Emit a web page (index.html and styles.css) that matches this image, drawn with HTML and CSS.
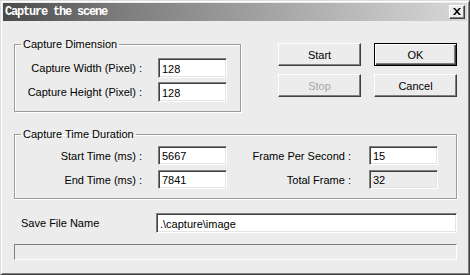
FILE: index.html
```html
<!DOCTYPE html>
<html>
<head>
<meta charset="utf-8">
<link rel="stylesheet" href="styles.css">
</head>
<body>
<div class="window">
  <div class="titlebar">
    <span class="title">Capture the scene</span>
    <span class="close"><svg width="8" height="7" viewBox="0 0 8 7"><path d="M0 0h2l2 2.2L6 0h2L5 3.5 8 7H6L4 4.8 2 7H0l3-3.5z" fill="#000"/></svg></span>
  </div>
  <div class="content">
    <div class="top-row">
      <fieldset class="group group-dim">
        <legend>Capture Dimension</legend>
        <div class="grid grid-2">
          <label class="lbl">Capture Width (Pixel) :</label>
          <input class="field" value="128" readonly>
          <label class="lbl">Capture Height (Pixel) :</label>
          <input class="field" value="128" readonly>
        </div>
      </fieldset>
      <div class="buttons">
        <button class="btn">Start</button>
        <button class="btn default">OK</button>
        <button class="btn disabled">Stop</button>
        <button class="btn">Cancel</button>
      </div>
    </div>
    <fieldset class="group group-time">
      <legend>Capture Time Duration</legend>
      <div class="grid grid-4">
        <label class="lbl">Start Time (ms) :</label>
        <input class="field" value="5667" readonly>
        <label class="lbl lbl-r">Frame Per Second :</label>
        <input class="field" value="15" readonly>
        <label class="lbl">End Time (ms) :</label>
        <input class="field" value="7841" readonly>
        <label class="lbl lbl-r">Total Frame :</label>
        <input class="field field-disabled" value="32" readonly>
      </div>
    </fieldset>
    <div class="save-row">
      <label class="save-lbl">Save File Name</label>
      <input class="field field-wide" value=".\capture\image" readonly>
    </div>
    <div class="progress"></div>
  </div>
</div>
</body>
</html>
```
FILE: styles.css
```css
* { box-sizing: border-box; }
html, body { margin: 0; padding: 0; background: #ececec; }
body { font-family: "Liberation Sans", Arial, sans-serif; font-size: 11px; color: #000; }

.window {
  width: 470px;
  height: 275px;
  background: #ececec;
  border: 1px solid;
  border-color: #dcdcdc #404040 #404040 #dcdcdc;
  box-shadow: inset 1px 1px #fff, inset -1px -1px #808080;
  padding: 2px;
}

.titlebar {
  height: 18px;
  background: linear-gradient(to right, #4a4a4a, #7c7c7c 25%, #d8d8d8);
  display: flex;
  align-items: center;
  justify-content: space-between;
  padding: 0 2px 0 2px;
}
.title {
  font-family: "Liberation Mono", "DejaVu Sans Mono", monospace;
  font-weight: bold;
  font-size: 12px;
  letter-spacing: -1.2px;
  color: #fff;
  line-height: 14px;
}
.close {
  width: 16px;
  height: 14px;
  background: #ececec;
  border: 1px solid;
  border-color: #fff #404040 #404040 #fff;
  box-shadow: inset -1px -1px #808080;
  display: flex;
  align-items: center;
  justify-content: center;
  padding-bottom: 1px;
}

.content {
  padding: 17px 10px 0 11px;
}

.top-row {
  display: flex;
  align-items: flex-start;
}

.group {
  margin: 0;
  min-width: 0;
  border: 1px solid #9c9c9c;
  box-shadow: inset 1px 1px #fff, 1px 1px #fff;
}
.group legend {
  padding: 0 2px;
  margin-left: 6px;
  line-height: 13px;
  font-size: 11px;
}
.group-dim {
  width: 227px;
  padding: 7px 0 9px 0;
}
.group-time {
  width: 443px;
  margin-top: 16px;
  padding: 5px 0 9px 0;
}

.grid {
  display: grid;
  align-items: center;
}
.grid-2 {
  grid-template-columns: 143px 69px;
  row-gap: 4px;
}
.grid-4 {
  grid-template-columns: 143px 69px 142px 69px;
  row-gap: 5px;
}
.lbl {
  text-align: right;
  padding-right: 16px;
  white-space: nowrap;
}
.lbl-r { padding-right: 18px; }

.field {
  display: block;
  width: 69px;
  height: 20px;
  margin: 0;
  padding: 1px 2px 0 3px;
  font-family: "Liberation Sans", Arial, sans-serif;
  font-size: 11px;
  color: #000;
  background: #fff;
  border: 1px solid;
  border-color: #808080 #fff #fff #808080;
  box-shadow: inset 1px 1px #404040, inset -1px -1px #e4e4e4;
  outline: none;
}
.grid-4 .field { height: 19px; }
.field-disabled { background: #ececec; }

.buttons {
  margin-left: 37px;
  margin-top: 5px;
  display: grid;
  grid-template-columns: 83px 83px;
  column-gap: 13px;
  row-gap: 8px;
}
.btn {
  height: 23px;
  margin: 0;
  padding: 0;
  font-family: "Liberation Sans", Arial, sans-serif;
  font-size: 11px;
  color: #000;
  background: #ececec;
  border: 1px solid;
  border-color: #fff #404040 #404040 #fff;
  box-shadow: inset -1px -1px #808080;
}
.btn.default {
  border: 1px solid #000;
  box-shadow: inset 1px 1px #fff, inset -1px -1px #404040, inset -2px -2px #808080;
}
.btn.disabled { color: #a6a6a6; }

.save-row {
  display: grid;
  grid-template-columns: 142px 1fr;
  align-items: center;
  margin-top: 14px;
}
.save-lbl { padding-left: 7px; }
.field-wide { width: 301px; height: 20px; }

.progress {
  margin-top: 11px;
  height: 16px;
  border: 1px solid;
  border-color: #808080 #fff #fff #808080;
}
```
